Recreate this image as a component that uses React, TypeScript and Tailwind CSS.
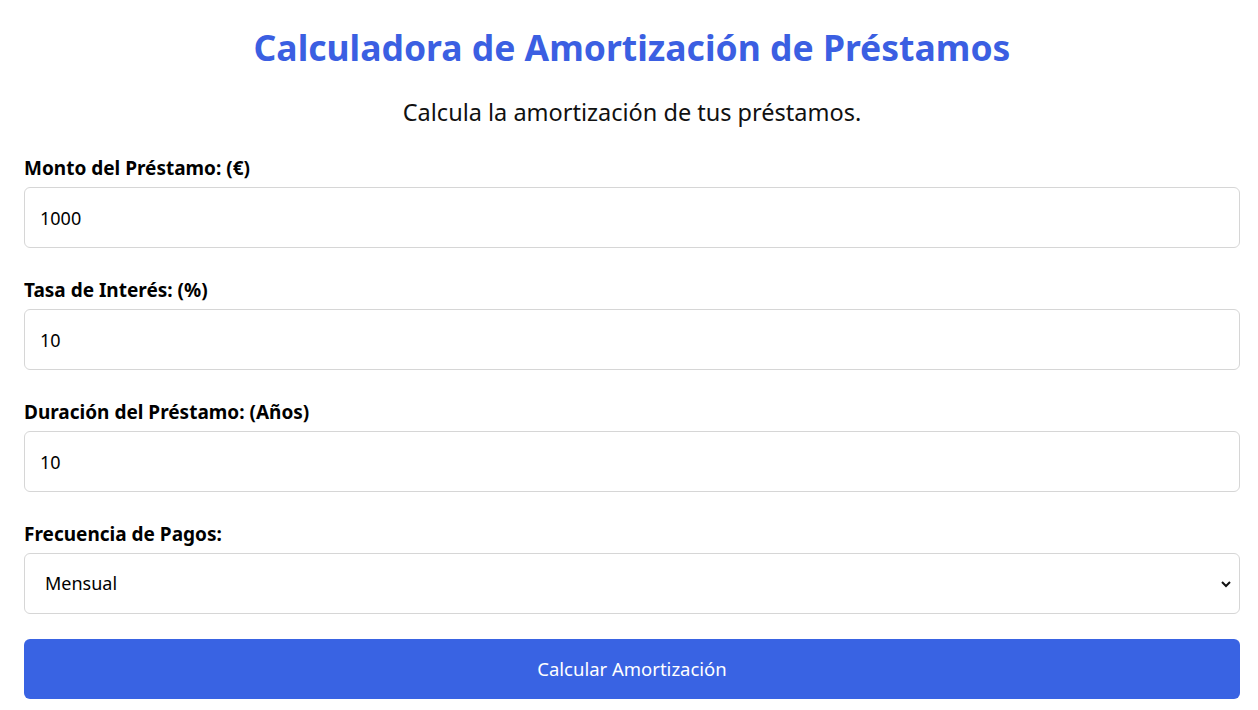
import React, { useState } from "react";

const fields = [
  { label: "Monto del Préstamo: (€)", value: "1000" },
  { label: "Tasa de Interés: (%)", value: "10" },
  { label: "Duración del Préstamo: (Años)", value: "10" },
];

const App = () => {
  const [values, setValues] = useState(fields.map((f) => f.value));
  const [freq, setFreq] = useState("mensual");

  return (
    <div className="min-h-screen bg-white text-black font-['Segoe_UI','Noto_Sans',sans-serif]">
      <div className="pl-6 pr-[18px] pt-[22px]">
        <h1 className="text-center text-[35.5px] leading-[50px] font-bold text-[#3b5fe2]">
          Calculadora de Amortización de Préstamos
        </h1>
        <p className="mt-[22px] text-center text-[23.5px] leading-[36px] text-[#111]">
          Calcula la amortización de tus préstamos.
        </p>

        <form className="mt-[25px]" onSubmit={(e) => e.preventDefault()}>
          {fields.map((f, i) => (
            <div key={f.label} className="mb-[29px]">
              <label className="block mb-[5px] text-[19px] leading-[27px] font-bold">
                {f.label}
              </label>
              <input
                type="number"
                value={values[i]}
                onChange={(e) => {
                  const next = [...values];
                  next[i] = e.target.value;
                  setValues(next);
                }}
                className="block w-full h-[61px] px-[15px] text-[18px] border border-[#d6d6d6] rounded-[6px] outline-none"
              />
            </div>
          ))}

          <div className="mb-[25px]">
            <label className="block mb-[5px] text-[19px] leading-[27px] font-bold">
              Frecuencia de Pagos:
            </label>
            <div className="relative">
              <select
                value={freq}
                onChange={(e) => setFreq(e.target.value)}
                className="block w-full h-[61px] pl-[20px] pr-10 text-[18px] border border-[#d6d6d6] rounded-[6px] bg-white appearance-none outline-none"
              >
                <option value="mensual">Mensual</option>
                <option value="trimestral">Trimestral</option>
                <option value="anual">Anual</option>
              </select>
              <svg
                className="absolute right-[8px] top-1/2 -translate-y-1/2 pointer-events-none"
                width="12"
                height="12"
                viewBox="0 0 12 12"
              >
                <path d="M2 4 L6 8 L10 4" fill="none" stroke="#111" strokeWidth="2" />
              </svg>
            </div>
          </div>

          <button
            type="submit"
            className="w-full h-[60px] rounded-[6px] bg-[#3963e3] text-white text-[18.5px]"
          >
            Calcular Amortización
          </button>
        </form>
      </div>
    </div>
  );
};

export default App;
